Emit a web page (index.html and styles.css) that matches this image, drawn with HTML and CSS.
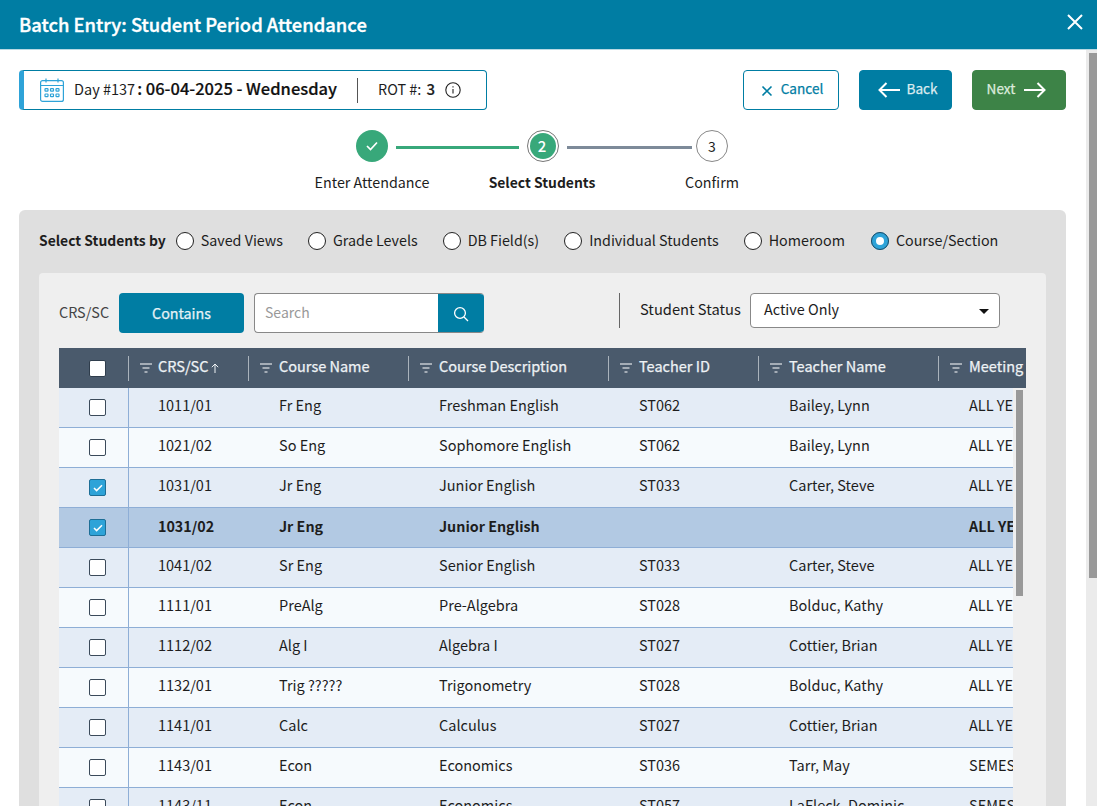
FILE: index.html
```html
<!DOCTYPE html>
<html lang="en">
<head>
<meta charset="utf-8">
<title>Batch Entry: Student Period Attendance</title>
<link rel="stylesheet" href="styles.css">
</head>
<body>
<header class="titlebar">
  <h1 class="title">Batch Entry: Student Period Attendance</h1>
  <svg class="close" width="16" height="16" viewBox="0 0 16 16"><path d="M1 1l14 14M15 1L1 15" stroke="#fff" stroke-width="2" fill="none"/></svg>
</header>
<main class="content">
  <div class="topbar">
    <div class="daybox">
      <svg class="cal" width="24" height="24" viewBox="0 0 24 24" fill="none" stroke="#2ea3d8" stroke-width="1.2"><rect x="0.6" y="2.6" width="22.8" height="20.8" rx="2"/><path d="M0.6 7.5h22.8M6 0.5v4M18 0.5v4"/><rect x="5" y="10.6" width="3" height="2.6" rx=".6"/><rect x="10.5" y="10.6" width="3" height="2.6" rx=".6"/><rect x="16" y="10.6" width="3" height="2.6" rx=".6"/><rect x="5" y="16" width="3" height="2.6" rx=".6"/><rect x="10.5" y="16" width="3" height="2.6" rx=".6"/><rect x="16" y="16" width="3" height="2.6" rx=".6"/></svg>
      <span class="dayno">Day #137</span><b class="daydate">: 06-04-2025 - Wednesday</b>
      <span class="daysep"></span>
      <span class="rot">ROT #: <b class="rotval">3</b></span>
      <svg class="info" width="16" height="16" viewBox="0 0 16 16" fill="none" stroke="#222" stroke-width="1.1"><circle cx="8" cy="8" r="7.2"/><path d="M8 7v4.6M8 4.2v1.4"/></svg>
    </div>
    <div class="actions">
      <button class="btn btn-cancel"><svg width="12" height="12" viewBox="0 0 12 12"><path d="M1.5 1.5l9 9M10.5 1.5l-9 9" stroke="#007da3" stroke-width="1.6" fill="none"/></svg><span class="btn-t">Cancel</span></button>
      <button class="btn btn-back"><svg width="22" height="16" viewBox="0 0 22 16"><path d="M22 8H1.5M8.5 1L1.5 8l7 7" stroke="#fff" stroke-width="2" fill="none"/></svg><span class="btn-t">Back</span></button>
      <button class="btn btn-next"><span class="btn-t">Next</span><svg width="22" height="16" viewBox="0 0 22 16"><path d="M0 8h20.5M13.5 1l7 7-7 7" stroke="#fff" stroke-width="2" fill="none"/></svg></button>
    </div>
  </div>

  <ol class="stepper">
    <li class="step step-done">
      <span class="dot"><svg width="12" height="10" viewBox="0 0 12 10"><path d="M1 5l3.5 3.5L11 1.5" stroke="#fff" stroke-width="1.7" fill="none"/></svg></span>
      <span class="steplabel">Enter Attendance</span>
    </li>
    <li class="line line-green"></li>
    <li class="step step-current">
      <span class="dot"><span class="dotin">2</span></span>
      <span class="steplabel">Select Students</span>
    </li>
    <li class="line line-gray"></li>
    <li class="step step-next">
      <span class="dot">3</span>
      <span class="steplabel">Confirm</span>
    </li>
  </ol>

  <section class="panel">
    <div class="radios">
      <strong class="radios-label">Select Students by</strong>
      <label class="radio r1"><i class="rc"></i>Saved Views</label>
      <label class="radio r2"><i class="rc"></i>Grade Levels</label>
      <label class="radio r3"><i class="rc"></i>DB Field(s)</label>
      <label class="radio r4"><i class="rc"></i>Individual Students</label>
      <label class="radio r5"><i class="rc"></i>Homeroom</label>
      <label class="radio"><i class="rc rc-on"></i>Course/Section</label>
    </div>
    <div class="inner">
      <div class="filters">
        <span class="f-label">CRS/SC</span>
        <button class="contains">Contains</button>
        <div class="search">
          <span class="search-input">Search</span>
          <span class="search-btn"><svg width="16" height="16" viewBox="0 0 16 16" fill="none" stroke="#fff" stroke-width="1.3"><circle cx="7" cy="7" r="5.4"/><path d="M11 11l4 4"/></svg></span>
        </div>
        <span class="f-sep"></span>
        <span class="status-label">Student Status</span>
        <div class="select">Active Only<i class="caret"></i></div>
      </div>
      <div class="grid">
        <div class="head">
          <div class="hcell hc0"><i class="cb cb-head"></i></div>
          <div class="hcell"><svg class="fi" width="12" height="10" viewBox="0 0 12 10"><path d="M0 1h12M2.5 5h7M4.5 9h3" stroke="#fff" stroke-width="1.2"/></svg>CRS/SC<svg class="sort" width="8" height="10" viewBox="0 0 8 10" fill="none" stroke="#eef2f5" stroke-width="1"><path d="M4 10V1M.8 4.2L4 1l3.2 3.2"/></svg></div>
          <div class="hcell"><svg class="fi" width="12" height="10" viewBox="0 0 12 10"><path d="M0 1h12M2.5 5h7M4.5 9h3" stroke="#fff" stroke-width="1.2"/></svg>Course Name</div>
          <div class="hcell"><svg class="fi" width="12" height="10" viewBox="0 0 12 10"><path d="M0 1h12M2.5 5h7M4.5 9h3" stroke="#fff" stroke-width="1.2"/></svg>Course Description</div>
          <div class="hcell"><svg class="fi" width="12" height="10" viewBox="0 0 12 10"><path d="M0 1h12M2.5 5h7M4.5 9h3" stroke="#fff" stroke-width="1.2"/></svg>Teacher ID</div>
          <div class="hcell"><svg class="fi" width="12" height="10" viewBox="0 0 12 10"><path d="M0 1h12M2.5 5h7M4.5 9h3" stroke="#fff" stroke-width="1.2"/></svg>Teacher Name</div>
          <div class="hcell"><svg class="fi" width="12" height="10" viewBox="0 0 12 10"><path d="M0 1h12M2.5 5h7M4.5 9h3" stroke="#fff" stroke-width="1.2"/></svg>Meeting</div>
        </div>
        <div class="rows">
          <div class="row"><div class="cell c0"><i class="cb"></i></div><div class="cell c1">1011/01</div><div class="cell">Fr Eng</div><div class="cell">Freshman English</div><div class="cell">ST062</div><div class="cell">Bailey, Lynn</div><div class="cell">ALL YE</div></div>
          <div class="row"><div class="cell c0"><i class="cb"></i></div><div class="cell c1">1021/02</div><div class="cell">So Eng</div><div class="cell">Sophomore English</div><div class="cell">ST062</div><div class="cell">Bailey, Lynn</div><div class="cell">ALL YE</div></div>
          <div class="row"><div class="cell c0"><i class="cb cb-on"><svg width="10" height="8" viewBox="0 0 10 8"><path d="M1 4l2.6 2.6L9 1.2" stroke="#fff" stroke-width="1.5" fill="none"/></svg></i></div><div class="cell c1">1031/01</div><div class="cell">Jr Eng</div><div class="cell">Junior English</div><div class="cell">ST033</div><div class="cell">Carter, Steve</div><div class="cell">ALL YE</div></div>
          <div class="row row-sel"><div class="cell c0"><i class="cb cb-on"><svg width="10" height="8" viewBox="0 0 10 8"><path d="M1 4l2.6 2.6L9 1.2" stroke="#fff" stroke-width="1.5" fill="none"/></svg></i></div><div class="cell c1">1031/02</div><div class="cell">Jr Eng</div><div class="cell">Junior English</div><div class="cell"></div><div class="cell"></div><div class="cell">ALL YE</div></div>
          <div class="row"><div class="cell c0"><i class="cb"></i></div><div class="cell c1">1041/02</div><div class="cell">Sr Eng</div><div class="cell">Senior English</div><div class="cell">ST033</div><div class="cell">Carter, Steve</div><div class="cell">ALL YE</div></div>
          <div class="row"><div class="cell c0"><i class="cb"></i></div><div class="cell c1">1111/01</div><div class="cell">PreAlg</div><div class="cell">Pre-Algebra</div><div class="cell">ST028</div><div class="cell">Bolduc, Kathy</div><div class="cell">ALL YE</div></div>
          <div class="row"><div class="cell c0"><i class="cb"></i></div><div class="cell c1">1112/02</div><div class="cell">Alg I</div><div class="cell">Algebra I</div><div class="cell">ST027</div><div class="cell">Cottier, Brian</div><div class="cell">ALL YE</div></div>
          <div class="row"><div class="cell c0"><i class="cb"></i></div><div class="cell c1">1132/01</div><div class="cell">Trig ?????</div><div class="cell">Trigonometry</div><div class="cell">ST028</div><div class="cell">Bolduc, Kathy</div><div class="cell">ALL YE</div></div>
          <div class="row"><div class="cell c0"><i class="cb"></i></div><div class="cell c1">1141/01</div><div class="cell">Calc</div><div class="cell">Calculus</div><div class="cell">ST027</div><div class="cell">Cottier, Brian</div><div class="cell">ALL YE</div></div>
          <div class="row"><div class="cell c0"><i class="cb"></i></div><div class="cell c1">1143/01</div><div class="cell">Econ</div><div class="cell">Economics</div><div class="cell">ST036</div><div class="cell">Tarr, May</div><div class="cell">SEMES</div></div>
          <div class="row"><div class="cell c0"><i class="cb"></i></div><div class="cell c1">1143/11</div><div class="cell">Econ</div><div class="cell">Economics</div><div class="cell">ST057</div><div class="cell">LaFleck, Dominic</div><div class="cell">SEMES</div></div>
          <div class="grid-track"><i class="grid-thumb"></i></div>
        </div>
      </div>
    </div>
  </section>
</main>
<div class="page-track"><i class="page-thumb"></i></div>
</body>
</html>
```

FILE: styles.css
```css
* { box-sizing: border-box; }
html, body { height: 100%; }
body {
  margin: 0;
  height: 806px;
  overflow: hidden;
  background: #fff;
  color: #1d1d1d;
  font-family: "Noto Sans CJK SC", "Noto Sans", sans-serif;
  font-size: 14.3px;
  position: relative;
}
.titlebar {
  height: 50px;
  background: #007da3;
  border-bottom: 1px solid #b9d9e3;
  display: flex;
  align-items: center;
  justify-content: space-between;
  padding: 0 14px 0 19px;
}
.title { margin: 0; color: #fff; font-size: 18.4px; font-weight: 500; line-height: 47px; -webkit-text-stroke: 0.35px #fff; }
.close { margin-top: -6px; }
.content { padding: 20px 31px 0 19px; }
.topbar { display: flex; justify-content: space-between; height: 40px; }
.daybox {
  width: 468px;
  height: 40px;
  border: 1px solid #007da3;
  border-left: 5px solid #2ea3d8;
  border-radius: 4px;
  display: flex;
  align-items: center;
  padding-left: 16px;
  background: #fff;
}
.cal { margin-right: 10px; }
.dayno { font-size: 14.5px; margin-top: -4px; }
.daydate { font-size: 16.5px; font-weight: 500; margin: -4px 0 0 2px; -webkit-text-stroke: 0.2px #111; color: #111; }
.daysep { width: 1px; height: 25px; background: #555; margin: 0 20px; }
.rot { font-size: 14.4px; margin-top: -4px; }
.rotval { font-weight: 500; font-size: 15px; margin-left: 2px; -webkit-text-stroke: 0.2px #111; }
.info { margin-left: 10px; }
.actions { display: flex; gap: 20px; }
.btn {
  height: 40px;
  border-radius: 4px;
  font: inherit;
  font-size: 13.6px;
  display: flex;
  align-items: center;
  justify-content: center;
  border: 1px solid #007da3;
  padding: 0;
}
.btn-t { -webkit-text-stroke: 0.25px currentColor; margin-top: -4px; }
.btn-cancel { width: 96px; background: #fff; color: #007da3; gap: 8px; padding-left: 2px; }
.btn-cancel svg { margin-top: 1px; }
.btn-back { width: 93px; background: #007da3; color: #dcebf0; gap: 6px; padding-left: 5px; }
.btn-next { width: 94px; background: #3d8347; border-color: #3d8347; color: #dcebdd; gap: 9px; padding-right: 5px; }

.stepper {
  list-style: none;
  margin: 20px 0 0;
  padding: 0 0 0 337px;
  display: flex;
  height: 80px;
}
.step { width: 32px; display: flex; flex-direction: column; align-items: center; }
.dot {
  width: 32px;
  height: 32px;
  flex: none;
  border-radius: 50%;
  display: flex;
  align-items: center;
  justify-content: center;
}
.step-done .dot { background: #38a87a; }
.step-current .dot { border: 1px solid #777; background: #fff; }
.dotin {
  width: 26px;
  height: 26px;
  border-radius: 50%;
  background: #38a87a;
  color: #fff;
  font-weight: 500;
  font-size: 15px;
  line-height: 25px;
  text-align: center;
  padding-right: 2px;
}
.step-next .dot { border: 1px solid #888; font-size: 14px; }
.steplabel { white-space: nowrap; margin-top: 9px; line-height: 22px; }
.step-current .steplabel { font-weight: 700; font-size: 13.9px; margin-left: -2px; }
.line { height: 3px; margin-top: 16px; }
.line-green { width: 123px; margin-left: 8px; margin-right: 8px; background: #38a87a; }
.line-gray { width: 125px; margin-left: 8px; margin-right: 4px; background: #7d8a99; }

.panel {
  width: 1047px;
  height: 700px;
  background: #dfdfdf;
  border-radius: 6px 6px 0 0;
  padding: 0 20px;
}
.radios { height: 61px; margin-bottom: 2px; display: flex; align-items: center; }
.radios-label { font-weight: 700; font-size: 13.9px; margin: -2px 10px 0 0; }
.radio { display: flex; align-items: center; gap: 7px; margin-top: -2px; }
.r1, .r2, .r3, .r4 { margin-right: 25px; }
.r5 { margin-right: 26px; }
.rc {
  width: 18px;
  height: 18px;
  border: 1px solid #222;
  border-radius: 50%;
  background: #fff;
  display: block;
  margin-top: 2px;
}
.rc-on { border: 5px solid #2ea3d8; outline: 1px solid #1d4c66; outline-offset: -1px; }
.inner {
  height: 640px;
  background: #efefef;
  border-radius: 4px 4px 0 0;
  padding: 20px;
}
.filters { display: flex; align-items: center; height: 40px; }
.f-label { color: #444; width: 60px; margin-top: -3px; font-size: 14.4px; }
.contains {
  width: 125px;
  height: 40px;
  background: #007da3;
  color: #e6f2f6;
  border: 0;
  border-radius: 4px;
  font: inherit;
  font-size: 14.3px;
  padding: 0 0 2px;
  -webkit-text-stroke: 0.25px currentColor;
}
.search {
  margin-left: 10px;
  width: 230px;
  height: 40px;
  display: flex;
  border: 1px solid #888;
  border-right: 0;
  border-radius: 4px;
  background: #fff;
  overflow: hidden;
}
.search-input { flex: 1; color: #999; font-size: 14px; padding-left: 10px; line-height: 37px; }
.search-btn { width: 46px; background: #007da3; display: flex; align-items: center; justify-content: center; margin: -1px 0; padding-top: 2px; }
.f-sep { width: 1px; height: 35px; background: #666; margin-left: 135px; margin-right: 20px; align-self: flex-start; }
.status-label { width: 110px; align-self: flex-start; line-height: 31px; font-size: 14.7px; white-space: nowrap; }
.select {
  width: 250px;
  height: 35px;
  border: 1px solid #888;
  border-radius: 4px;
  background: #fff;
  padding-left: 13px;
  line-height: 29px;
  position: relative;
  align-self: flex-start;
  font-size: 14.4px;
}
.caret {
  position: absolute;
  right: 10px;
  top: 15px;
  border: 5px solid transparent;
  border-top-color: #111;
  border-bottom: 0;
}
.grid { width: 967px; margin-top: 15px; overflow: hidden; }
.head, .row {
  display: grid;
  grid-template-columns: 69px 120px 160px 200px 150px 180px 200px;
  height: 40px;
  white-space: nowrap;
}
.head { background: #4a5a6c; color: #eef2f5; align-items: center; }
.hcell {
  height: 25px;
  padding: 0 0 6px 11px;
  border-left: 1px solid #aab3bc;
  display: flex;
  align-items: center;
  font-size: 14.5px;
  -webkit-text-stroke: 0.25px currentColor;
  overflow: hidden;
}
.hcell.hc0 { border-left: 0; padding: 0 0 0 8px; justify-content: center; }
.fi { margin-right: 7px; flex: none; margin-top: 6px; }
.hcell:nth-child(2) .fi { margin-right: 6px; }
.sort { margin: 6px 0 0 3px; flex: none; }
.rows { width: 967px; height: 420px; position: relative; overflow: hidden; background: #efefef; }
.row {
  width: 954px;
  overflow: hidden;
  background: #f6fafd;
  border-bottom: 1px solid #8eaed6;
}
.row:nth-child(odd) { background: #e4ecf6; }
.row.row-sel { background: #b2c9e3; font-weight: 700; }
.cell { padding-left: 31px; line-height: 33px; overflow: hidden; font-size: 14.5px; }
.row-sel .cell { font-size: 14.3px; line-height: 35px; }
.cell.c1 { border-left: 1px solid #8eaed6; padding-left: 29px; }
.cell.c0 { padding: 0 0 0 8px; display: flex; align-items: center; justify-content: center; }
.cb {
  width: 17px;
  height: 17px;
  border: 1px solid #3b4a5a;
  border-radius: 2px;
  background: #fff;
  display: flex;
  align-items: center;
  justify-content: center;
}
.cb-head { border-color: #2f3d4c; }
.cb-on { background: #2ea3d8; border-color: #1d6e96; }
.grid-track { position: absolute; right: 0; top: 0; width: 13px; height: 100%; background: #efefef; }
.grid-thumb { position: absolute; left: 3px; top: 2px; width: 7px; height: 206px; background: #999; display: block; }
.page-track { position: absolute; right: 0; top: 50px; bottom: 0; width: 11px; background: #ebebeb; }
.page-thumb { position: absolute; right: 0; top: 3px; width: 8px; height: 525px; background: #999; display: block; }
```
